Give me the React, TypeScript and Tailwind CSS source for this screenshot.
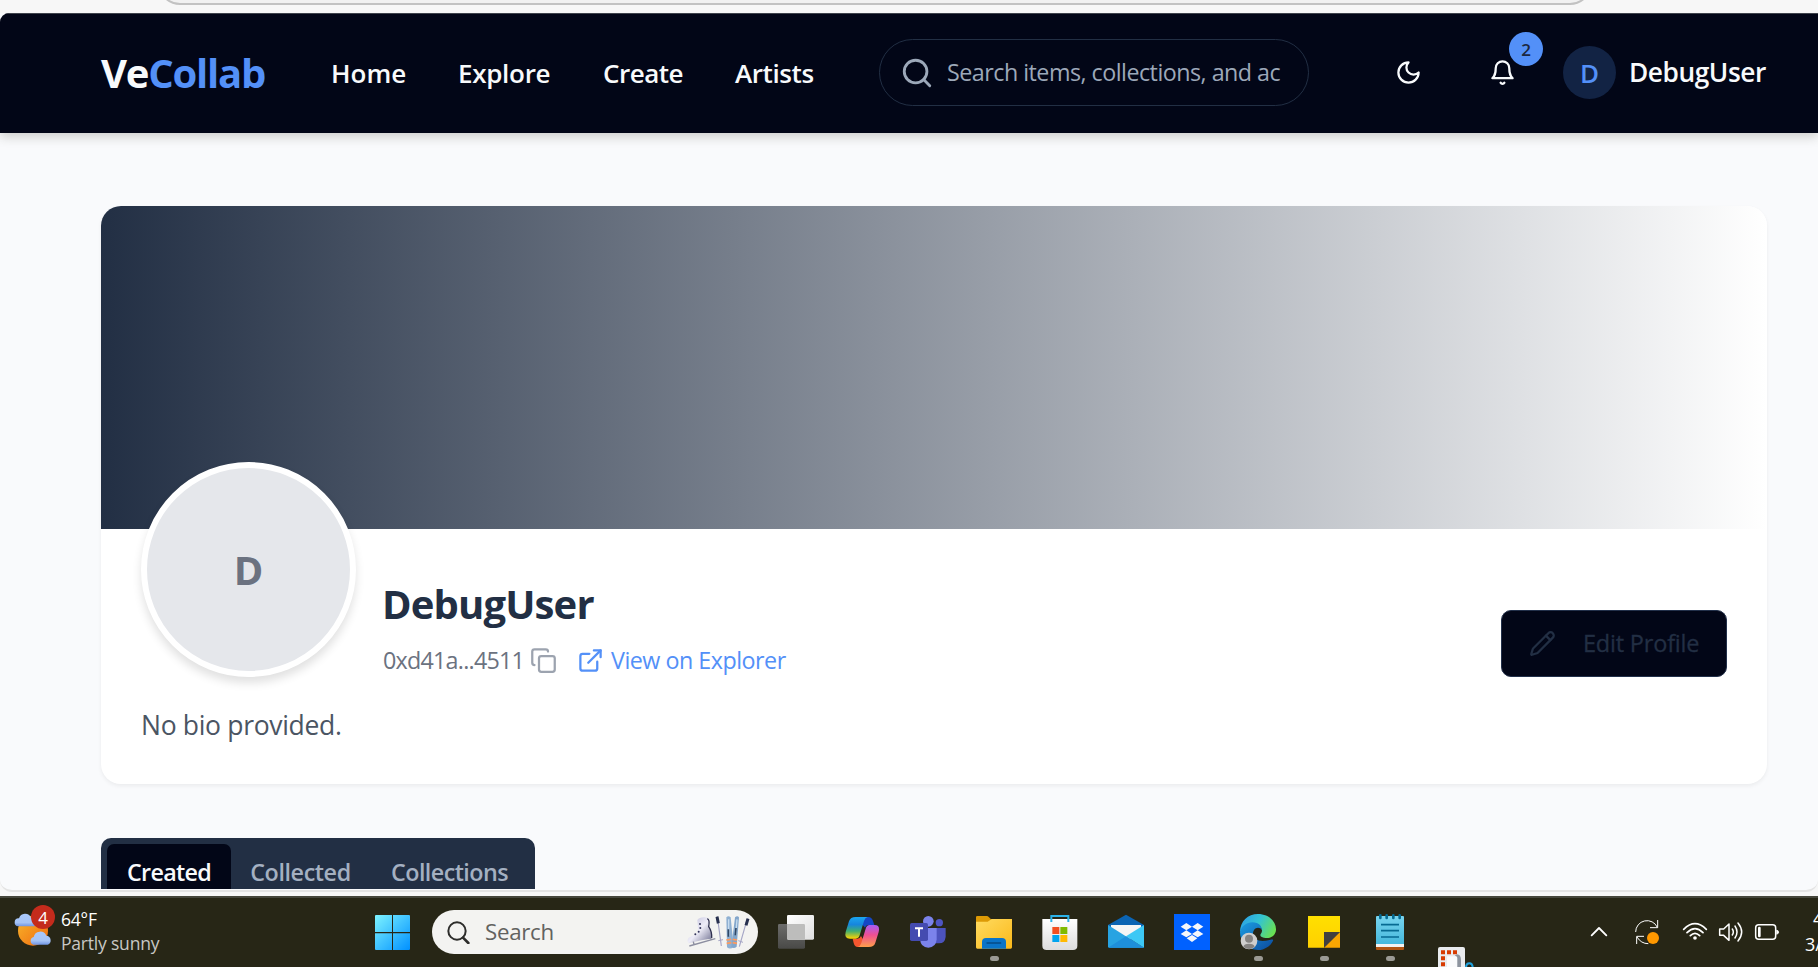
import React from "react";
import { Search, Copy, ExternalLink, Pencil } from "lucide-react";

const nav = [
  { label: "Home", box: "w-[127px]" },
  { label: "Explore", box: "w-[145px] tracking-[-0.3px]" },
  { label: "Create", box: "w-[132px] tracking-[-0.5px]" },
  { label: "Artists", box: "w-[144px] tracking-[-0.4px]" },
];

function Header() {
  return (
    <header className="relative z-10 flex h-[120px] shrink-0 items-center border-t border-[#3f434c] bg-[#020617] pb-[2px] pl-[101px] text-[#f8fafc] shadow-[0_4px_10px_rgba(60,60,40,0.22)]">
      <div className="w-[230px] whitespace-nowrap pt-[1px] text-[40px] font-bold leading-none tracking-[-1.2px]">
        Ve<span className="text-[#5390f8]">Collab</span>
      </div>
      <nav className="flex text-[26px] font-semibold leading-none">
        {nav.map((n) => (
          <a key={n.label} className={n.box}>{n.label}</a>
        ))}
      </nav>
      <div className="mr-[75px] flex h-[67px] w-[430px] items-center rounded-full border border-[#222f44] pl-[20px] text-[#9ca8b9]">
        <Search size={34} strokeWidth={2} />
        <span className="ml-[13px] whitespace-nowrap pt-[1px] text-[23.3px] leading-none tracking-[-0.52px]">Search items, collections, and ac</span>
      </div>
      <div className="flex w-[94px] justify-center">
        <svg width="27" height="27" viewBox="0 0 24 24" fill="none" stroke="currentColor" strokeWidth="2" strokeLinecap="round" strokeLinejoin="round" className="mr-[45px]">
          <path d="M12 3a6 6 0 0 0 9 9 9 9 0 1 1-9-9Z" />
        </svg>
      </div>
      <div className="relative flex h-[67px] w-[85px] items-center pl-[11px]">
        <svg width="27" height="27" viewBox="0 0 24 24" fill="none" stroke="currentColor" strokeWidth="2" strokeLinecap="round" strokeLinejoin="round">
          <path d="M6 8a6 6 0 0 1 12 0c0 7 3 9 3 9H3s3-2 3-9" />
          <path d="M10.3 21a1.94 1.94 0 0 0 3.4 0" />
        </svg>
        <span className="absolute left-[31px] top-[-7px] flex size-[34px] items-center justify-center rounded-full bg-[#5390f8] text-[17px] font-semibold leading-none text-[#1b2740]">2</span>
      </div>
      <div className="flex size-[53px] items-center justify-center rounded-full bg-[#122344] text-[26px] font-semibold leading-none text-[#5390f8]">D</div>
      <span className="ml-[13px] text-[26.3px] font-semibold leading-none tracking-[-0.45px]">DebugUser</span>
    </header>
  );
}

function ProfileCard() {
  return (
    <section className="mt-[73px] h-[578px] w-[1666px] overflow-hidden rounded-[20px] bg-white shadow-[0_2px_4px_rgba(0,0,0,0.06)]">
      <div className="h-[323px] bg-linear-to-r/srgb from-[#222f44] to-white" />
      <div className="px-10">
        <div className="relative -mt-[67px] flex items-end">
          <div className="flex size-[215px] items-center justify-center rounded-full border-[6px] border-white bg-[#e5e7eb] text-[40px] font-bold leading-none text-[#6b7280] shadow-[0_6px_10px_rgba(0,0,0,0.12)]">D</div>
          <div className="ml-[24px]">
            <h1 className="pl-[2px] text-[40px] font-bold leading-[48px] tracking-[-0.85px] text-[#222f44]">DebugUser</h1>
            <div className="mt-[16px] flex h-[33px] items-center pl-[3px] text-[23.3px] leading-none text-[#6b7280]">
              <span className="w-[147px] tracking-[-0.76px]">0xd41a...4511</span>
              <Copy size={27} className="text-[#9ca3af]" />
              <ExternalLink size={27} className="ml-[20px] text-[#5390f8]" />
              <span className="ml-[7px] tracking-[-0.5px] text-[#5390f8]">View on Explorer</span>
            </div>
          </div>
          <button className="ml-auto flex h-[67px] w-[226px] items-center rounded-[10px] border border-[#22304a] bg-[#020617] pl-[27px] text-[#222f44]">
            <Pencil size={27} />
            <span className="ml-[27px] text-[23.5px] leading-none tracking-[-0.2px] [-webkit-text-stroke:0.3px_#222f44]">Edit Profile</span>
          </button>
        </div>
        <p className="mt-[28px] text-[26.5px] leading-[40px] tracking-[-0.32px] text-[#4b5563]">No bio provided.</p>
      </div>
    </section>
  );
}

function Tabs() {
  return (
    <div className="mt-[54px] flex h-[67px] w-[434px] rounded-[10px] bg-[#222f44] p-[6px] text-[23.3px] font-semibold leading-none text-[#a4b0c1]">
      <span className="flex h-[54px] w-[124px] items-center justify-center rounded-[7px] bg-[#020617] pt-[3px] tracking-[-0.7px] text-[#f8fafc]">Created</span>
      <span className="flex h-[54px] w-[139px] items-center justify-center pt-[3px] tracking-[-0.4px]">Collected</span>
      <span className="flex h-[54px] w-[159px] items-center justify-center pt-[3px] tracking-[-0.55px]">Collections</span>
    </div>
  );
}

type IconProps = { box: string; running?: boolean; children: React.ReactNode };

function AppIcon({ box, running, children }: IconProps) {
  return (
    <div className="flex w-[66px] shrink-0 flex-col items-center pt-[16px]">
      <svg width="36" height="36" viewBox={box}>{children}</svg>
      {running && <span className="mt-[6px] h-[5px] w-[9px] rounded-full bg-[#9b9a94]" />}
    </div>
  );
}

function Weather() {
  return (
    <div className="flex w-[375px] shrink-0 pl-[14px]">
      <div className="relative w-[45px] pt-[6px]">
        <svg width="44" height="44" viewBox="42 72 132 132">
          <defs>
            <linearGradient id="sun" x1="0" y1="0" x2="1" y2="1"><stop offset="0" stopColor="#f8b62b" /><stop offset="1" stopColor="#ef6a10" /></linearGradient>
            <linearGradient id="cloud" x1="0" y1="0" x2="0" y2="1"><stop offset="0" stopColor="#a9c8fb" /><stop offset=".7" stopColor="#a5c3f6" /><stop offset="1" stopColor="#6f94e2" /></linearGradient>
          </defs>
          <circle cx="99" cy="152" r="45" fill="url(#sun)" />
          <path d="M55 139a12 12 0 0 1 2-24a19 19 0 0 1 36-2a14 14 0 0 1 10 26Z" fill="url(#cloud)" />
          <path d="M100 194a12 12 0 0 1 1-23a20 20 0 0 1 38-4a14 14 0 0 1 4 27Z" fill="url(#cloud)" />
        </svg>
        <span className="absolute left-[17px] top-[7px] flex size-[24px] items-center justify-center rounded-full bg-[#c42b1c] text-[17px] leading-none text-white">4</span>
      </div>
      <div className="ml-[2px] mt-[9px] whitespace-nowrap text-[17.5px] leading-[24px] tracking-[-0.2px] text-white">
        <div>64°F</div>
        <div className="text-[#c9c8c4]">Partly sunny</div>
      </div>
    </div>
  );
}

function TaskSearch() {
  return (
    <div className="ml-[22px] mt-[12px] flex h-[44px] w-[326px] shrink-0 items-center rounded-full bg-[#f3f3f1] pl-[15px]">
      <svg width="23" height="23" viewBox="1343 121 69 69" fill="none" stroke="#2d2d2b" strokeLinecap="round">
        <circle cx="1373" cy="151" r="26" strokeWidth="6" />
        <path d="M1391 171l16 16" strokeWidth="8" />
      </svg>
      <span className="ml-[15px] pt-[1px] text-[22.3px] leading-none tracking-[-0.3px] text-[#62625f]">Search</span>
      <svg width="65" height="36" viewBox="20 62 195 108" className="ml-auto mr-[7px]">
        <defs><linearGradient id="boot" x1="0" y1="0" x2="1" y2="1"><stop offset="0" stopColor="#b9b7d6" /><stop offset=".5" stopColor="#eeedf8" /><stop offset="1" stopColor="#6a6b8c" /></linearGradient></defs>
        <path d="M54 80q6-9 22-8q12 0 14 8l-2 20q8 12 9 30l-3 6-28 5-38 9q-7-8 0-17l24-12q4-8 4-18Z" fill="url(#boot)" />
        <path d="M84 76q8 4 4 24q10 14 9 34" fill="none" stroke="#303150" strokeWidth="4" />
        <g fill="#34355a"><circle cx="62" cy="92" r="3" /><circle cx="63" cy="104" r="3" /><circle cx="58" cy="115" r="3" /><circle cx="48" cy="123" r="3" /></g>
        <path d="M30 158l78-22M42 145l2 9M94 134l2 7" stroke="#8c8ea0" strokeWidth="4" fill="none" />
        <path d="M114 70l12 88M204 76l-24 84" stroke="#a5a6c6" strokeWidth="3.5" />
        <path d="M113 70l4 20M206 76l-6 20" stroke="#27304f" strokeWidth="9" />
        <path d="M117 142l14-3M177 142l14 5" stroke="#a5a6c6" strokeWidth="3" />
        <path d="M141 72q6-6 13 0l9 88q-10 10-20 2Z" fill="#8fb0d2" />
        <path d="M167 72q7-6 12 0l-7 88q-9 8-16 0Z" fill="#83a6cb" />
        <path d="M148 78v50M173 78l-4 48" stroke="#c7dcee" strokeWidth="4" />
        <path d="M147 108v22M170 104l-2 22" stroke="#304866" strokeWidth="5" />
        <path d="M141 140l14-2M142 150l14-2M160 138l13 2M160 148l13 2" stroke="#ff9a5c" strokeWidth="5" />
      </svg>
    </div>
  );
}

function Apps() {
  return (
    <div className="ml-[5px] flex shrink-0">
      <AppIcon box="294 57 108 108">
        <defs>
          <linearGradient id="tv" x1="0" y1="0" x2="1" y2="1"><stop stopColor="#fff" /><stop offset="1" stopColor="#dedede" /></linearGradient>
          <linearGradient id="tg" x1="0" y1="0" x2="0" y2="1"><stop stopColor="#6d6d6b" /><stop offset="1" stopColor="#494947" /></linearGradient>
        </defs>
        <rect x="294" y="87" width="81" height="74" rx="4" fill="url(#tg)" />
        <rect x="321" y="60" width="81" height="74" rx="4" fill="url(#tv)" />
        <path d="M321 87h50q4 0 4 4v43h-50q-4 0-4-4Z" fill="#bdbdbc" />
      </AppIcon>
      <AppIcon box="492 57 108 108">
        <defs>
          <linearGradient id="c1" x1="0" y1="0" x2="0" y2="1"><stop stopColor="#1ba6f0" /><stop offset=".35" stopColor="#1685dd" /><stop offset=".65" stopColor="#3fae72" /><stop offset="1" stopColor="#ffd400" /></linearGradient>
          <linearGradient id="c2" x1="0" y1="0" x2="0" y2="1"><stop stopColor="#a75cf5" /><stop offset=".45" stopColor="#ee4f93" /><stop offset="1" stopColor="#ff9f4a" /></linearGradient>
        </defs>
        <path d="M529 66h36q10 0 14 12l4 12h-18q-8 0-10 8Z" fill="#1447c4" />
        <path d="M563 156h-30q-9 0-12-12l-3-13h14q8 0 11-8Z" fill="#f4562f" />
        <path d="M527 66h36q-8 2-11 12l-13 43q-3 10-12 10h-17q-18 0-13-20l10-32q4-13 20-13Z" fill="url(#c1)" />
        <path d="M566 156h-33q8-2 11-12l13-43q3-11 12-11h15q17 0 12 21l-10 32q-4 13-20 13Z" fill="url(#c2)" />
      </AppIcon>
      <AppIcon box="690 57 108 108">
        <circle cx="778" cy="83" r="11" fill="#4f55c4" />
        <path d="M762 99h35v26q-2 20-20 20h-15Z" fill="#4c53bd" />
        <circle cx="745" cy="79" r="16" fill="#7b83eb" />
        <path d="M720 99h50v34q-2 25-25 25t-25-25Z" fill="#7b83eb" />
        <rect x="690" y="84" width="54" height="54" rx="5" fill="#444bb0" />
        <path d="M705 100h24M717 100v25" stroke="#fff" strokeWidth="6" />
      </AppIcon>
      <AppIcon box="888 57 108 108" running>
        <defs><linearGradient id="fo" x1="0" y1="0" x2="1" y2="1"><stop stopColor="#ffdb60" /><stop offset="1" stopColor="#fbb91a" /></linearGradient></defs>
        <path d="M888 66q0-3 4-3h28q4 0 7 4l6 6h30v20h-75Z" fill="#dd9a05" />
        <path d="M888 80h35l12-8h61v85q0 4-4 4H892q-4 0-4-4Z" fill="url(#fo)" />
        <path d="M906 161v-20q0-12 12-12h48q12 0 12 12v20Z" fill="#0a74c8" />
        <path d="M921 144h41" stroke="#064b85" strokeWidth="4" strokeLinecap="round" />
      </AppIcon>
      <AppIcon box="65 57 108 108">
        <defs><linearGradient id="st" x1="0" y1="0" x2="0" y2="1"><stop stopColor="#fff" /><stop offset="1" stopColor="#dcdcdc" /></linearGradient></defs>
        <path d="M66 72h105v80q0 13-13 13H79q-13 0-13-13Z" fill="url(#st)" />
        <path d="M93 81V63h51v18" fill="none" stroke="#2bb3ea" strokeWidth="6" />
        <path d="M96 96h21v21H96Z" fill="#f25022" /><path d="M120 96h21v21h-21Z" fill="#7fba00" />
        <path d="M96 120h21v21H96Z" fill="#00a4ef" /><path d="M120 120h21v21h-21Z" fill="#ffb900" />
      </AppIcon>
      <AppIcon box="264 57 108 108">
        <path d="M264 90l54-31 54 31v12H264Z" fill="#0b64b3" />
        <path d="M273 90h90v26l-45 22-45-22Z" fill="#f5f5f5" />
        <path d="M264 90l108 68h-104q-4 0-4-4Z" fill="#27a3e2" />
        <path d="M372 90v68l-54-34Z" fill="#3dc8f5" />
        <path d="M264 158h108l-54-34Z" fill="#1e8fdb" />
      </AppIcon>
      <AppIcon box="462 57 108 108">
        <rect x="462" y="57" width="108" height="108" fill="#0061ff" />
        <path d="M499 84l17 11-17 11-17-11ZM533 84l17 11-17 11-17-11ZM499 106l17 11-17 10-17-10ZM533 106l17 11-17 10-17-10ZM516 120l16 10-16 11-16-11Z" fill="#f5f7fa" />
      </AppIcon>
      <AppIcon box="660 57 108 108" running>
        <defs>
          <linearGradient id="e1" x1="0" y1=".2" x2="1" y2=".6"><stop stopColor="#2b9fe8" /><stop offset=".5" stopColor="#34c4d0" /><stop offset="1" stopColor="#69e053" /></linearGradient>
          <linearGradient id="e2" x1="0" y1="0" x2="1" y2="1"><stop stopColor="#1b9de2" /><stop offset="1" stopColor="#0c4a9c" /></linearGradient>
        </defs>
        <path d="M660 112c0-34 24-55 54-55 32 0 54 22 54 46 0 18-14 26-27 26-13 0-20-4-20-9 0-4 5-6 5-13 0-9-9-17-22-17-20 0-35 9-44 22Z" fill="url(#e1)" />
        <path d="M660 112c4-19 20-30 37-30 20 0 29 13 29 24-2-6-7-8-12-8-9 0-15 9-15 17 0 14 12 23 29 23 18 0 26-6 31-4 4 2-14 31-45 31-32 0-54-24-54-53Z" fill="url(#e2)" />
        <circle cx="687" cy="138" r="25" fill="#cfcecd" />
        <circle cx="687" cy="131" r="12" fill="#858381" />
        <path d="M670 155q2-9 17-9t17 9q-8 7-17 7t-17-7Z" fill="#858381" />
      </AppIcon>
      <AppIcon box="858 57 108 108" running>
        <defs><linearGradient id="sn" x1="0" y1="0" x2="0" y2="1"><stop stopColor="#ffe000" /><stop offset="1" stopColor="#ffd000" /></linearGradient></defs>
        <path d="M864 63h96v48l-48 47h-48Z" fill="url(#sn)" />
        <path d="M912 158l48-47v47Z" fill="#f9a602" />
        <path d="M912 111h48l-48 47Z" fill="#413f40" />
      </AppIcon>
      <AppIcon box="1056 57 108 108" running>
        <defs><linearGradient id="np" x1="0" y1="0" x2="0" y2="1"><stop stopColor="#78d4ef" /><stop offset="1" stopColor="#45b8dc" /></linearGradient></defs>
        <rect x="1068" y="150" width="84" height="15" rx="3" fill="#b05412" />
        <rect x="1068" y="142" width="84" height="14" fill="#f2f2f2" />
        <path d="M1068 66q0-3 3-3h78q3 0 3 3v81h-84Z" fill="url(#np)" />
        <path d="M1083 89h54M1083 107h54M1083 126h54" stroke="#066a92" strokeWidth="5" />
        <path d="M1081 61v8M1100 61v8M1120 61v8M1139 61v8" stroke="#066a92" strokeWidth="8" strokeLinecap="round" />
      </AppIcon>
      <svg width="36" height="20" viewBox="1254 156 108 60" className="ml-[15px] mt-[49px] shrink-0">
        <rect x="1254" y="156" width="81" height="80" rx="6" fill="#e9ebee" />
        <path d="M1281 184h30v32h-30Z" fill="#fafbfc" />
        <path d="M1311 178q12 0 12 18v20h-11v-28q-1-6-8-6Z" fill="#8d949e" />
        <path d="M1263 166h12v12h-12ZM1281 166h12v12h-12ZM1299 166h12v12h-12ZM1263 184h12v12h-12ZM1263 202h12v12h-12Z" fill="#d83b01" />
        <path d="M1338 218q0-13 10-13t10 13" fill="none" stroke="#1fa0dc" strokeWidth="6" />
      </svg>
    </div>
  );
}

function Tray() {
  return (
    <div className="ml-[116px] flex shrink-0 pt-[21px] text-white">
      <svg width="18" height="26" viewBox="90 72 54 78" fill="none" stroke="#fff" strokeWidth="5.5" strokeLinecap="round" strokeLinejoin="round"><path d="M95 121l22-22 22 22" /></svg>
      <svg width="26" height="26" viewBox="222 72 78 78" className="ml-[26px]" fill="none" stroke="#fff" strokeWidth="3">
        <path d="M227 111a34 34 0 0 1 65-14M293 75v23h-23M230 147v-23h22M231 126q12 20 34 20" />
        <circle cx="279" cy="129" r="18" fill="#ff9800" stroke="none" />
      </svg>
      <svg width="26" height="26" viewBox="366 72 78 78" className="ml-[22px]" fill="none" stroke="#fff" strokeWidth="5" strokeLinecap="round">
        <path d="M371 103q34-34 68 0M381 113q24-24 48 0M391 122q14-14 28 0" /><circle cx="405" cy="129" r="5.5" fill="#fff" stroke="none" />
      </svg>
      <svg width="26" height="26" viewBox="474 72 78 78" className="ml-[10px]" fill="none" stroke="#fff" strokeWidth="4.5" strokeLinecap="round" strokeLinejoin="round">
        <path d="M479 102h12l16-15v49l-16-15h-12ZM517 102q6 9 0 18M525 93q12 18 0 36M534 84q22 27 0 54" />
      </svg>
      <svg width="26" height="26" viewBox="582 72 78 78" className="ml-[10px]" fill="none" stroke="#fff" strokeWidth="4.5">
        <rect x="587" y="89" width="60" height="44" rx="9" /><path d="M598 99v24" strokeWidth="8" strokeLinecap="round" /><path d="M650 105v13q6-2 6-6.500t-6-6.500Z" fill="#fff" strokeWidth="2" />
      </svg>
      <div className="-mt-[14px] ml-[25px] whitespace-nowrap text-[18px] leading-[26px] text-white">
        <div className="pl-[8px]">4</div>
        <div>3/</div>
      </div>
    </div>
  );
}

export default function App() {
  return (
    <div className="flex h-[967px] w-[1818px] flex-col overflow-hidden bg-[#f7f7f7] font-['Open_Sans','Noto_Sans',sans-serif]">
      <div className="flex h-[13px] shrink-0 items-start overflow-hidden pl-[158px]">
        <div className="-mt-[39px] h-[44px] w-[1434px] shrink-0 rounded-[22px] border-2 border-[#c2c2c2] bg-[#f1f1f1]" />
      </div>
      <div className="h-[879px] shrink-0 rounded-b-[12px] border-b-2 border-[#e4e4e4] bg-[#f9fafc]">
        <main className="flex h-[876px] flex-col overflow-hidden rounded-tl-[9px]">
          <Header />
          <div className="pl-[101px]">
            <ProfileCard />
            <Tabs />
          </div>
        </main>
      </div>
      <footer className="mt-[4px] flex h-[71px] shrink-0 overflow-hidden border-t-2 border-[#45463b] bg-[#272616]">
        <Weather />
        <svg width="35" height="35" viewBox="1125 105 105 105" className="mt-[17px] shrink-0">
          <defs><linearGradient id="win" gradientUnits="userSpaceOnUse" x1="1125" y1="105" x2="1230" y2="210"><stop stopColor="#7df3ff" /><stop offset="1" stopColor="#0090ff" /></linearGradient></defs>
          <path d="M1128 105h48v51h-51v-48q0-3 3-3ZM1179 105h48q3 0 3 3v48h-51ZM1125 160h51v50h-48q-3 0-3-3ZM1179 160h51v47q0 3-3 3h-48Z" fill="url(#win)" />
        </svg>
        <TaskSearch />
        <Apps />
        <Tray />
      </footer>
    </div>
  );
}
